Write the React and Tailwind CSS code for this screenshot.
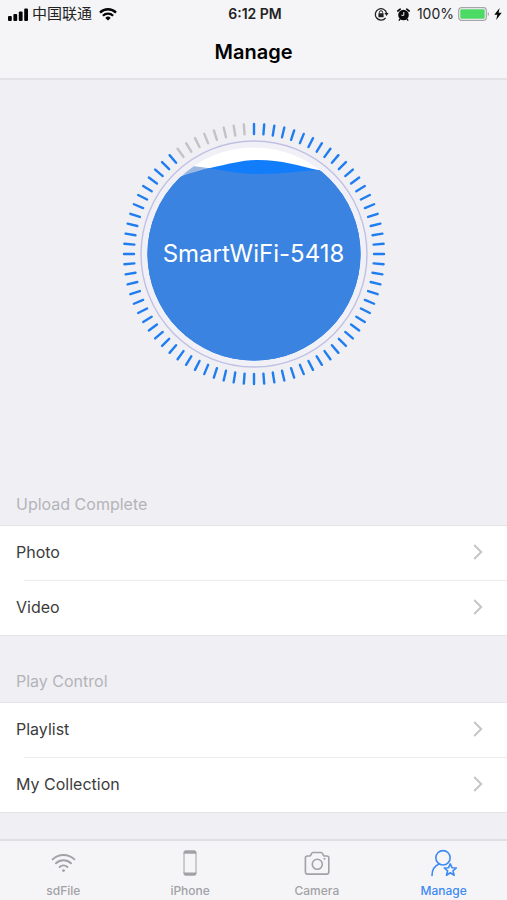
import React, { useState } from 'react';

const TICKS = 80;
const EMPTY_TICKS = 8;

const BACK_WAVE = 'M-107-68C-80-74-62-82-44-86-25-90-12-94 4-94 28-94 45-88 64-84L107-76V107H-107z';
const FRONT_WAVE = 'M-107-84-61-88C-40-86-22-80 5-80 30-80 45-83 64-84L107-90V107H-107z';

const sections = [
  { title: 'Upload Complete', items: ['Photo', 'Video'] },
  { title: 'Play Control', items: ['Playlist', 'My Collection'] },
];

const SignalIcon = () => (
  <svg width="20" height="13" viewBox="0 0 20 13" fill="#050505" aria-hidden="true">
    <rect x="0" y="8" width="3.8" height="5" rx="1" />
    <rect x="5.4" y="6" width="3.8" height="7" rx="1" />
    <rect x="10.8" y="3.5" width="3.8" height="9.5" rx="1" />
    <rect x="16.2" y="0.5" width="3.8" height="12.5" rx="1" />
  </svg>
);

const StatusWifiIcon = () => (
  <svg width="18" height="13" viewBox="0 0 18 13" fill="none" stroke="#050505" aria-hidden="true">
    <path d="M1 4.6a11.3 11.3 0 0 1 16 0" strokeWidth="2.4" />
    <path d="M3.9 7.7a7.2 7.2 0 0 1 10.2 0" strokeWidth="2.2" />
    <path d="M9 12.6 6.3 9.9a3.8 3.8 0 0 1 5.4 0z" fill="#050505" stroke="none" />
  </svg>
);

const RotationLockIcon = () => (
  <svg width="15" height="14" viewBox="0 0 15 14" fill="none" stroke="#222" aria-hidden="true">
    <path d="M11.6 10.8A5.7 5.7 0 1 1 12.6 6.2" strokeWidth="1.3" />
    <path d="M10.4 6h4.2l-2.1 3z" fill="#222" stroke="none" />
    <rect x="4.4" y="6.3" width="5.2" height="3.9" rx="0.5" fill="#222" stroke="none" />
    <path d="M5.4 6.5V5.3a1.6 1.6 0 0 1 3.2 0v1.2" strokeWidth="1" />
  </svg>
);

const AlarmIcon = () => (
  <svg width="13" height="13" viewBox="0 0 13 13" aria-hidden="true">
    <circle cx="6.5" cy="7" r="5.3" fill="#0a0a0a" />
    <path d="M0.9 3 3.2 1.2M12.1 3 9.8 1.2" stroke="#0a0a0a" strokeWidth="1.7" strokeLinecap="round" />
    <path d="M3 11.2l-.8 1M10 11.2l.8 1" stroke="#0a0a0a" strokeWidth="1.3" strokeLinecap="round" />
    <path d="M6.8 4v3.3H4.4" fill="none" stroke="#f5f5f8" strokeWidth="1" />
  </svg>
);

const BatteryIcon = () => (
  <svg width="32" height="14" viewBox="0 0 32 14" aria-hidden="true">
    <rect x="0.7" y="0.7" width="27.6" height="12.6" rx="2.8" fill="#f8f8fa" stroke="#a6a6aa" strokeWidth="1.2" />
    <rect x="2.3" y="2.3" width="24.4" height="9.4" rx="1.2" fill="#4cd964" />
    <path d="M29.8 4.8a2.6 2.6 0 0 1 0 4.4z" fill="#a6a6aa" />
  </svg>
);

const BoltIcon = () => (
  <svg width="8" height="12" viewBox="0 0 8 12" fill="#0a0a0a" aria-hidden="true">
    <path d="M5.6 0 0.3 6.8h3L2.2 12l5.5-7.2H4.6z" />
  </svg>
);

const ChevronIcon = () => (
  <svg width="10" height="16" viewBox="0 0 10 16" fill="none" stroke="#c5c5ca" strokeWidth="2" aria-hidden="true">
    <path d="M1.2 1 8.2 8l-7 7" />
  </svg>
);

const WifiTabIcon = () => (
  <svg width="26" height="28" viewBox="0 0 26 28" fill="none" stroke="currentColor" strokeWidth="1.9" strokeLinecap="round" aria-hidden="true">
    <path d="M2.6 10.4a15.6 15.6 0 0 1 21.8 0" />
    <path d="M6 14.3a10.8 10.8 0 0 1 15 0" />
    <path d="M9.6 18a5.8 5.8 0 0 1 7.8 0" />
    <circle cx="13.5" cy="21.6" r="1.4" fill="currentColor" stroke="none" />
  </svg>
);

const PhoneTabIcon = () => (
  <svg width="14" height="28" viewBox="0 0 14 28" aria-hidden="true">
    <rect x="1" y="2" width="12" height="24" rx="1.5" fill="none" stroke="currentColor" strokeWidth="1" />
    <path d="M0.7 4.8V3.2q0-1.7 1.7-1.7h9.2q1.7 0 1.7 1.7v1.6zM0.7 23.6v1.2q0 1.7 1.7 1.7h9.2q1.7 0 1.7-1.7v-1.2z" fill="currentColor" />
  </svg>
);

const CameraTabIcon = () => (
  <svg width="26" height="28" viewBox="0 0 26 28" fill="none" stroke="currentColor" strokeWidth="1.6" strokeLinejoin="round" aria-hidden="true">
    <path d="M3.4 7h2q1 0 1.4-.9l.7-1.6q.4-1 1.5-1h8.1q1.1 0 1.5 1l.7 1.6q.4.9 1.4.9h2.1q2 0 2 2v14.1q0 2-2 2H3.4q-2 0-2-2V9q0-2 2-2z" />
    <circle cx="13.3" cy="15.3" r="5" />
    <path d="M19.6 9.8h1.8" strokeWidth="1.8" />
  </svg>
);

const ManageTabIcon = () => (
  <svg width="26" height="28" viewBox="0 0 26 28" fill="none" stroke="currentColor" strokeWidth="1.6" strokeLinejoin="round" aria-hidden="true">
    <circle cx="12" cy="8.8" r="7.2" />
    <path d="M1 26.6c0-6 3.2-10.2 7.6-11.9" strokeLinecap="round" />
    <path d="m19.3 14.9 1.7 3.8 4.3.3-3.3 2.8 1.1 4.4-3.8-2.4-3.8 2.4 1.1-4.4-3.3-2.8 4.3-.3z" />
  </svg>
);

const tabs = [
  { name: 'sdFile', Icon: WifiTabIcon },
  { name: 'iPhone', Icon: PhoneTabIcon },
  { name: 'Camera', Icon: CameraTabIcon },
  { name: 'Manage', Icon: ManageTabIcon },
];

const Gauge = ({ label }) => (
  <div className="grid place-items-center">
    <svg className="col-start-1 row-start-1" width="264" height="264" viewBox="-132 -132 264 264" aria-hidden="true">
      <defs>
        <clipPath id="tank">
          <circle r="106.5" />
        </clipPath>
        <clipPath id="back-wave">
          <path d={BACK_WAVE} />
        </clipPath>
      </defs>
      {Array.from({ length: TICKS }, (_, i) => (
        <line
          key={i}
          y1="-130"
          y2="-120"
          stroke={i >= TICKS - EMPTY_TICKS ? '#c3c3c6' : '#1f7df0'}
          strokeWidth="2.4"
          strokeLinecap="round"
          transform={`rotate(${(i * 360) / TICKS})`}
        />
      ))}
      <circle r="113" fill="#f0f0f6" stroke="#c0c0e4" strokeWidth="1.4" />
      <g clipPath="url(#tank)">
        <rect x="-107" y="-107" width="214" height="214" fill="#fff" />
        <path d={FRONT_WAVE} fill="#9db8e0" />
        <path d={BACK_WAVE} fill="#127dfb" />
        {/* the two waves blend where they overlap */}
        <path d={FRONT_WAVE} fill="#3b83e0" clipPath="url(#back-wave)" />
      </g>
    </svg>
    <span className="col-start-1 row-start-1 text-2xl text-white">{label}</span>
  </div>
);

const App = () => {
  const [activeTab, setActiveTab] = useState('Manage');

  return (
    <div className="flex min-h-screen flex-col bg-[#efeff4] font-['Inter','Noto_Sans_CJK_SC',sans-serif]">
      <header className="border-b-2 border-[#e3e3e7] bg-[#f5f5f8]">
        <div className="grid h-7 grid-cols-[1fr_auto_1fr] items-center pr-[5px] pl-2 text-sm text-[#222]">
          <div className="flex items-center gap-1">
            <SignalIcon />
            <span className="mr-[3px] text-[15px] leading-5">中国联通</span>
            <StatusWifiIcon />
          </div>
          <span className="font-semibold">6:12 PM</span>
          <div className="flex items-center justify-end">
            <RotationLockIcon />
            <span className="mr-[7px] ml-2"><AlarmIcon /></span>
            <span className="mr-1">100%</span>
            <BatteryIcon />
            <span className="ml-1"><BoltIcon /></span>
          </div>
        </div>
        <h1 className="h-[50px] pt-2 text-center text-xl leading-8 font-semibold text-black">Manage</h1>
      </header>

      <main className="flex flex-col gap-6 pt-[42px] pb-6">
        <div className="mb-[73px]">
          <Gauge label="SmartWiFi-5418" />
        </div>
        {sections.map(section => (
          <section key={section.title}>
            <h2 className="h-[42px] px-4 text-base leading-[42px] text-[#b4b4b8]">{section.title}</h2>
            <ul className="border-y border-[#e4e4e8] bg-white">
              {section.items.map((item, i) => (
                <li key={item}>
                  {i > 0 && <div className="ml-6 h-px bg-[#ececee]" />}
                  <button className="flex h-[54px] w-full items-center justify-between pr-6 pb-0.5 pl-4 text-base text-[#3c3c3c]">
                    {item}
                    <ChevronIcon />
                  </button>
                </li>
              ))}
            </ul>
          </section>
        ))}
      </main>

      <nav className="mt-auto grid h-[61px] grid-cols-4 border-t-2 border-[#dedee3] bg-[#f5f5f8]">
        {tabs.map(({ name, Icon }) => (
          <button
            key={name}
            onClick={() => setActiveTab(name)}
            className={`flex flex-col items-center gap-1 pt-2 text-xs leading-5 font-medium ${activeTab === name ? 'text-[#3d8bf2]' : 'text-[#a2a2a6]'}`}
          >
            <Icon />
            {name}
          </button>
        ))}
      </nav>
    </div>
  );
};

export default App;
